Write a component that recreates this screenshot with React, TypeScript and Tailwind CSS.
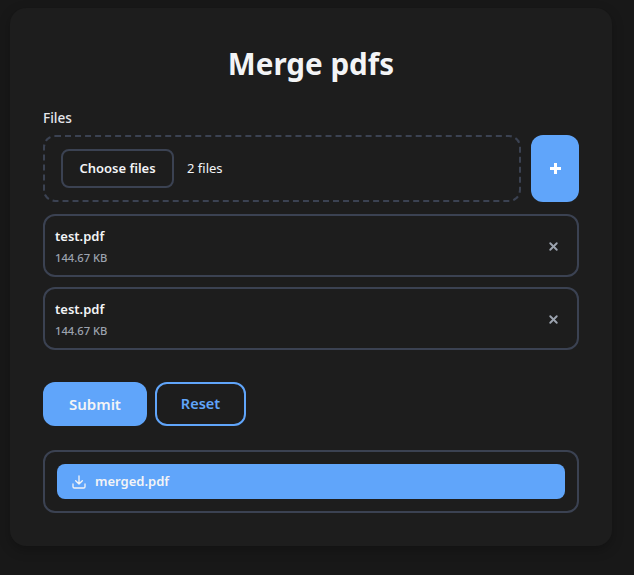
import { X } from 'lucide-react';

const files = [
  { name: 'test.pdf', size: '144.67 KB' },
  { name: 'test.pdf', size: '144.67 KB' },
];

export default function App() {
  return (
    <div className="min-h-[575px] bg-[#181818] pt-2 pl-2.5 pr-[22px] pb-[29px] font-['Noto_Sans',sans-serif] text-[#f3f4f6]">
      <div className="h-[538px] rounded-2xl bg-[#1d1d1d] px-[33px] pt-8 shadow-[0_4px_12px_rgba(0,0,0,0.25)]">
        <h1 className="h-12 text-center text-[29.6px] leading-[48px] font-bold text-[#f3f4f6]">Merge pdfs</h1>

        <label className="mt-5 block h-[19px] text-[13.6px] leading-[19px] font-medium text-[#e5e7eb]">Files</label>
        <div className="mt-2 flex h-[67px] gap-2.5">
          <div className="flex flex-1 items-center gap-[13px] rounded-xl border-2 border-dashed border-[#3b4252] pl-4">
            <button className="h-[39px] w-[113px] rounded-lg border-2 border-[#3b4252] pt-px text-[13px] font-semibold text-[#f3f4f6]">
              Choose files
            </button>
            <span className="pt-px text-[13px] text-[#f3f4f6]">2 files</span>
          </div>
          <button className="flex w-12 items-center justify-center rounded-xl bg-[#60a5fa] text-white">
            <svg width="13" height="13" viewBox="0 0 13 13" fill="none" stroke="currentColor" strokeWidth="3">
              <path d="M6.5 1v11M1 6.5h11" />
            </svg>
          </button>
        </div>

        <div className="mt-3 flex flex-col gap-2.5">
          {files.map((f, i) => (
            <div key={i} className="flex h-[63px] items-center justify-between rounded-xl border-2 border-[#3b4252] pt-0.5 pr-[17px] pl-2.5">
              <div>
                <div className="text-[13px] leading-[18px] font-semibold text-[#f3f4f6]">{f.name}</div>
                <div className="mt-[5px] text-[11.2px] leading-[16px] font-medium text-[#9ca3af]">{f.size}</div>
              </div>
              <X size={13} strokeWidth={3.5} className="text-[#9ca3af]" />
            </div>
          ))}
        </div>

        <div className="mt-8 flex gap-2">
          <button className="h-11 w-[104px] rounded-xl bg-[#60a5fa] text-[15px] font-semibold text-[#f3f4f6]">Submit</button>
          <button className="h-11 w-[91px] rounded-xl border-2 border-[#60a5fa] text-[14.5px] font-semibold text-[#60a5fa]">Reset</button>
        </div>

        <div className="mt-6 flex h-[63px] items-center rounded-xl border-2 border-[#3b4252] px-3">
          <a className="flex h-[35px] w-full items-center gap-2 rounded-lg bg-[#60a5fa] pl-[14px] text-[13px] font-semibold text-[#f3f4f6]">
            <svg width="16" height="16" viewBox="0 0 24 24" fill="none" stroke="currentColor" strokeWidth="2" strokeLinecap="round" strokeLinejoin="round">
              <path d="M12 3v12M7 10l5 5 5-5M3 15v4a2 2 0 0 0 2 2h14a2 2 0 0 0 2-2v-4" />
            </svg>
            <span className="pt-px">merged.pdf</span>
          </a>
        </div>
      </div>
    </div>
  );
}
